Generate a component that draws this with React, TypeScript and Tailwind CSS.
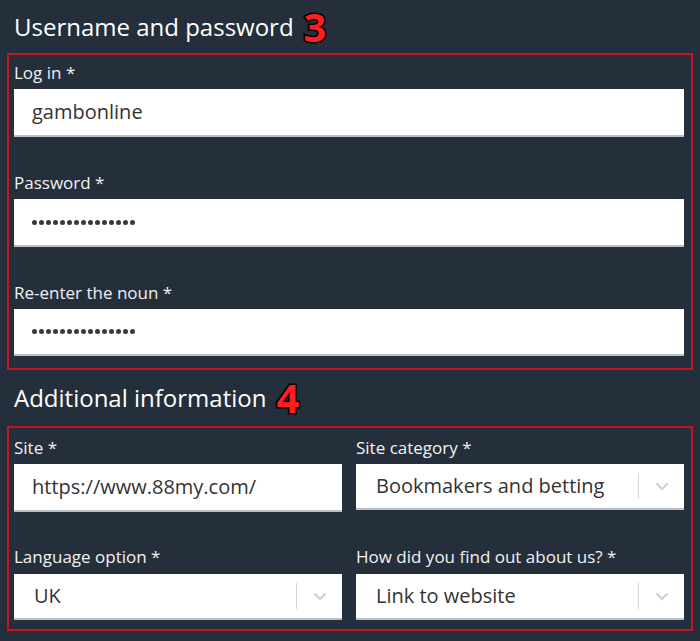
import React from 'react';

const font = { fontFamily: '"Open Sans", "Noto Sans", sans-serif' };

const Step: React.FC<{ n: string }> = ({ n }) => (
  <span className="ml-[10px] text-[40px] font-bold leading-none text-[#ff1e1e] [-webkit-text-stroke:3px_#000] [paint-order:stroke_fill]">
    {n}
  </span>
);

const Title: React.FC<{ text: string; step: string; h: string }> = ({ text, step, h }) => (
  <div className={`flex items-center pl-[14px] ${h}`}>
    <span className="text-[24px] leading-8 text-white">{text}</span>
    <Step n={step} />
  </div>
);

const Label: React.FC<{ text: string; className?: string }> = ({ text, className }) => (
  <div className={`text-[17px] leading-6 text-[#f2f2f2] ${className ?? ''}`}>{text}</div>
);

const TextBox: React.FC<{ children: React.ReactNode; h?: string }> = ({ children, h = 'h-[48px]' }) => (
  <div className={`flex items-center bg-white border-b-2 border-[#b9c0c8] pl-[18px] text-[20px] text-[#333] ${h}`}>
    {children}
  </div>
);

const Dots: React.FC = () => (
  <div className="flex gap-[2px]">
    {Array.from({ length: 15 }).map((_, i) => (
      <span key={i} className="w-[5px] h-[5px] rounded-full bg-[#3a3a3a]" />
    ))}
  </div>
);

const Select: React.FC<{ value: string }> = ({ value }) => (
  <div className="flex items-center h-[46px] bg-white border-b-2 border-[#b9c0c8] text-[20px] text-[#333]">
    <span className="flex-1 pl-[20px]">{value}</span>
    <span className="w-px h-[26px] bg-[#d6d6d6]" />
    <span className="w-[45px] flex justify-center">
      <svg width="14" height="9" viewBox="0 0 14 9" fill="none">
        <path d="M1.5 1.5 7 7l5.5-5.5" stroke="#cfcfcf" strokeWidth="2" />
      </svg>
    </span>
  </div>
);

export default function App() {
  return (
    <div className="w-[700px] h-[641px] bg-[#252f3b] overflow-hidden" style={font}>
      <Title text="Username and password" step="3" h="h-[53px]" />
      <div className="mx-[7px] border-2 border-[#c8141e] pl-[5px] pr-[7px] pt-[6px] pb-[12px]">
        <Label text="Log in *" className="mb-[4px]" />
        <TextBox>gambonline</TextBox>
        <Label text="Password *" className="mt-[34px] mb-[4px]" />
        <TextBox>
          <Dots />
        </TextBox>
        <Label text="Re-enter the noun *" className="mt-[34px] mb-[4px]" />
        <TextBox h="h-[47px]">
          <Dots />
        </TextBox>
      </div>
      <Title text="Additional information" step="4" h="h-[56px]" />
      <div className="mx-[7px] border-2 border-[#c8141e] pl-[5px] pr-[7px] pt-[8px] pb-[9px] grid grid-cols-2 gap-x-[14px]">
        <div>
          <Label text="Site *" className="mb-[4px]" />
          <TextBox>https://www.88my.com/</TextBox>
          <Label text="Language option *" className="mt-[33px] mb-[5px]" />
          <Select value="UK" />
        </div>
        <div>
          <Label text="Site category *" className="mb-[4px]" />
          <Select value="Bookmakers and betting" />
          <Label text="How did you find out about us? *" className="mt-[35px] mb-[5px]" />
          <Select value="Link to website" />
        </div>
      </div>
    </div>
  );
}
